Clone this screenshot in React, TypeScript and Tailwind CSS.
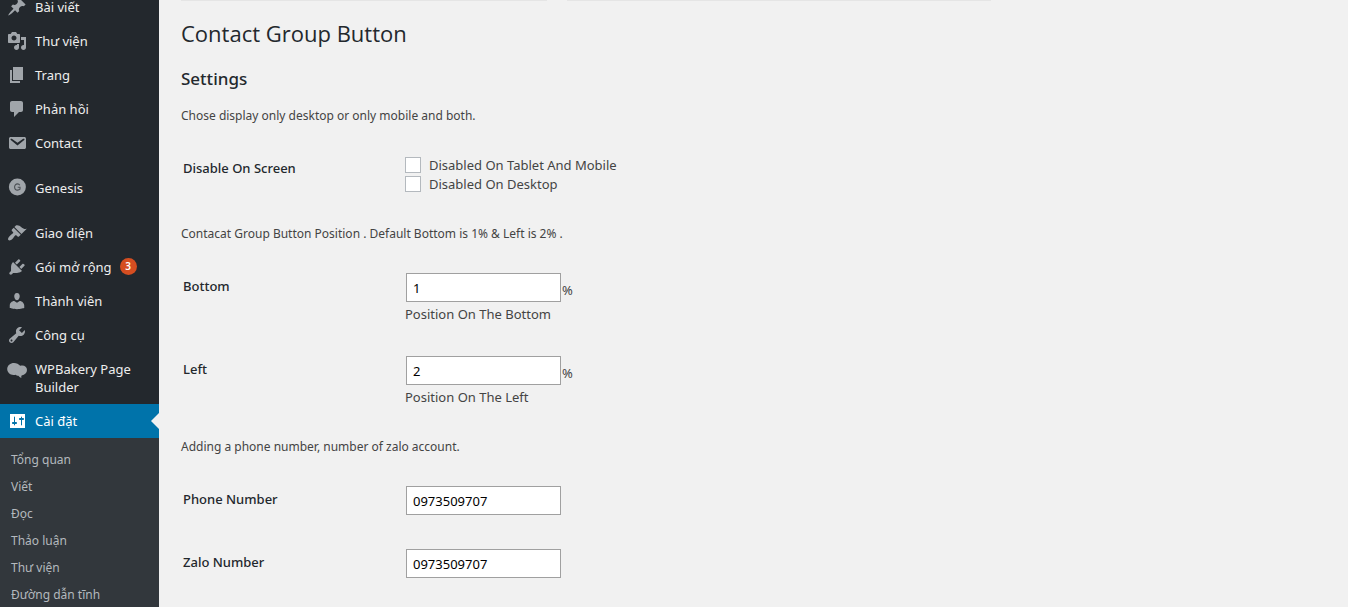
import React from "react";

const paths = {
  post: "M10.44 3.02l1.82-1.82 6.36 6.35-1.83 1.82c-1.05-.68-2.48-.57-3.41.36l-.75.75c-.92.93-1.04 2.35-.35 3.41l-1.83 1.82-2.41-2.41-2.8 2.79c-.42.42-3.38 2.71-3.8 2.29s1.86-3.39 2.28-3.81l2.79-2.79L4.1 9.36l1.83-1.82c1.05.69 2.48.57 3.4-.36l.75-.75c.93-.92 1.05-2.35.36-3.41z",
  media: "M13 11V4c0-.55-.45-1-1-1h-1.67L9 1H5L3.67 3H2c-.55 0-1 .45-1 1v7c0 .55.45 1 1 1h10c.55 0 1-.45 1-1zM7 4.5c1.38 0 2.5 1.12 2.5 2.5S8.38 9.5 7 9.5 4.5 8.38 4.5 7 5.62 4.5 7 4.5zM14 6h5v10.5c0 1.38-1.12 2.5-2.5 2.5S14 17.88 14 16.5s1.12-2.5 2.5-2.5c.17 0 .34.02.5.05V9h-3V6zm-4 8.05V13h2v3.5c0 1.38-1.12 2.5-2.5 2.5S7 17.88 7 16.5 8.12 14 9.5 14c.17 0 .34.02.5.05z",
  page: "M6 15V2h10v13H6zm-1 1h8v2H3V5h2v11z",
  comments: "M5 2h9c1.1 0 2 .9 2 2v7c0 1.1-.9 2-2 2h-2l-5 5v-5H5c-1.1 0-2-.9-2-2V4c0-1.1.9-2 2-2z",
  email: "M3.87 4h13.25C18.37 4 19 4.59 19 5.79v8.42c0 1.19-.63 1.79-1.88 1.79H3.87c-1.25 0-1.88-.6-1.88-1.79V5.79c0-1.2.63-1.79 1.88-1.79zm6.62 8.6l6.74-5.53c.24-.2.43-.66.13-1.07-.29-.41-.82-.42-1.17-.17l-5.7 3.86L4.8 5.83c-.35-.25-.88-.24-1.17.17-.3.41-.11.87.13 1.07z",
  appearance: "M14.48 11.06L7.41 3.99l1.5-1.5c.5-.56 2.3-.47 3.51.32 1.21.8 1.43 1.28 2.91 2.1 1.18.64 2.45 1.26 4.45.85zm-.71.71L6.7 4.7 4.93 6.47c-.39.39-.39 1.02 0 1.41l1.06 1.06c.39.39.39 1.03 0 1.42-.6.6-1.43 1.11-2.21 1.69-.35.26-.7.53-1.01.84C1.43 14.23.4 16.08 1.4 17.07c.99 1 2.84-.03 4.18-1.36.31-.31.58-.66.85-1.02.57-.78 1.08-1.61 1.69-2.21.39-.39 1.02-.39 1.41 0l1.06 1.06c.39.39 1.02.39 1.41 0z",
  plugins: "M13.11 4.36L9.87 7.6 8 5.73l3.24-3.24c.35-.34 1.05-.2 1.56.32.52.51.66 1.21.31 1.55zm-8 1.77l.91-1.12 9.01 9.01-1.19.84c-.71.71-2.63 1.16-3.82 1.16H6.14L4.9 17.26c-.59.59-1.54.59-2.12 0-.59-.58-.59-1.53 0-2.12l1.24-1.24v-3.88c0-1.13.4-3.19 1.09-3.89zm7.26 3.97l3.24-3.24c.34-.35 1.04-.21 1.55.31.52.51.66 1.21.31 1.55l-3.24 3.25z",
  users: "M10 9.25c-2.27 0-2.73-3.44-2.73-3.44C7 4.02 7.82 2 9.97 2c2.16 0 2.98 2.02 2.71 3.81 0 0-.41 3.44-2.68 3.44zm0 2.57L12.72 10c2.39 0 4.52 2.33 4.52 4.53v2.49s-3.65 1.13-7.24 1.13c-3.65 0-7.24-1.13-7.24-1.13v-2.49c0-2.25 1.94-4.48 4.47-4.48z",
  tools: "M16.68 9.77c-1.34 1.34-3.3 1.67-4.95.99l-5.41 6.52c-.99.99-2.59.99-3.58 0s-.99-2.59 0-3.57l6.52-5.42c-.68-1.65-.35-3.61.99-4.95 1.28-1.28 3.12-1.62 4.72-1.06l-2.89 2.89 2.82 2.82 2.86-2.87c.53 1.58.18 3.39-1.08 4.65zM3.81 16.21c.4.39 1.04.39 1.43 0 .4-.4.4-1.04 0-1.43-.39-.4-1.03-.4-1.43 0-.39.39-.39 1.03 0 1.43z",
  bakery: "M7 4C3.300 4 .2 6.600.2 10c0 3.400 2.900 5.800 6.200 6 1 .1 1.700-.1 2.400-.2.500.9 1.500 1.200 2.600 1 .5.8 1.600 1.600 3 2.200-.3-.9-.2-1.800.2-2.600 3.300-.5 5.400-2.700 5.400-5.500 0-2.800-2.200-4.500-4.600-4.500-.9 0-1.500.1-2.200.4C11.700 5.100 9.600 4 7 4z",
  settings: "M18 17V3H3v14zM8 11h1c.55 0 1 .45 1 1s-.45 1-1 1H8v1c0 .28-.22.500-.5.500s-.5-.22-.5-.5V13H6c-.55 0-1-.45-1-1s.45-1 1-1h1V6c0-.28.22-.5.500-.5s.5.22.500.500V11zm6-2h-1c-.55 0-1-.45-1-1s.45-1 1-1h1V6c0-.28.22-.5.500-.5s.5.22.500.500V7h1c.55 0 1 .45 1 1s-.45 1-1 1h-1v5c0 .28-.22.500-.5.500s-.5-.22-.5-.5V9z",
};

type IconName = keyof typeof paths | "genesis";

function MenuIcon({ name }: { name: IconName }) {
  return (
    <svg viewBox="0 0 20 20" className="h-5 w-5 shrink-0 fill-current" aria-hidden="true">
      {name === "genesis" ? (
        <>
          <circle cx="10.400" cy="9" r="8.500" />
          <path
            d="M12.800 7.200C12.300 6.300 11.500 5.900 10.500 5.900C8.700 5.900 7.600 7.200 7.600 9C7.600 10.900 8.800 12.100 10.600 12.100C11.600 12.100 12.500 11.700 13 11.200V9.200H10.700"
            fill="none"
            stroke="#4a4e53"
            strokeWidth="1.1"
          />
        </>
      ) : (
        <path fillRule="evenodd" d={paths[name]} />
      )}
    </svg>
  );
}

const groups: { icon: IconName; label: string; count?: number; active?: boolean }[][] = [
  [
    { icon: "post", label: "Bài viết" },
    { icon: "media", label: "Thư viện" },
    { icon: "page", label: "Trang" },
    { icon: "comments", label: "Phản hồi" },
    { icon: "email", label: "Contact" },
  ],
  [{ icon: "genesis", label: "Genesis" }],
  [
    { icon: "appearance", label: "Giao diện" },
    { icon: "plugins", label: "Gói mở rộng", count: 3 },
    { icon: "users", label: "Thành viên" },
    { icon: "tools", label: "Công cụ" },
    { icon: "bakery", label: "WPBakery Page Builder" },
    { icon: "settings", label: "Cài đặt", active: true },
  ],
];

const submenu = ["Tổng quan", "Viết", "Đọc", "Thảo luận", "Thư viện", "Đường dẫn tĩnh"];

function Sidebar() {
  return (
    <nav className="w-[159px] shrink-0 overflow-hidden bg-[#23282d]">
      <div className="-mt-2.5 flex flex-col gap-[11px]">
        {groups.map((group, i) => (
          <ul key={i}>
            {group.map((item) => (
              <li key={item.label}>
                <a
                  href="#"
                  aria-current={item.active ? "page" : undefined}
                  className={
                    item.active
                      ? "relative flex gap-2 bg-[#0073aa] py-2 pl-[7px] text-[13px] leading-[18px] text-white"
                      : "relative flex gap-2 py-2 pl-[7px] text-[13px] leading-[18px] text-[#eeeeee]"
                  }
                >
                  <span className={item.active ? "-my-px h-5 text-white" : "-my-px h-5 text-[#a0a5aa]"}>
                    <MenuIcon name={item.icon} />
                  </span>
                  <span>{item.label}</span>
                  {item.count && (
                    <span className="h-[17px] w-[17px] rounded-full bg-[#d54e21] text-center text-[10px] leading-[17px] font-semibold text-white">
                      {item.count}
                    </span>
                  )}
                  {item.active && (
                    <span className="absolute top-1/2 right-0 -translate-y-1/2 border-y-8 border-r-8 border-y-transparent border-r-[#f1f1f1]" />
                  )}
                </a>
              </li>
            ))}
          </ul>
        ))}
      </div>
      <ul className="bg-[#32373c] pt-2 pb-2">
        {submenu.map((label) => (
          <li key={label}>
            <a href="#" className="block pl-[11px] text-xs leading-[27px] text-[#b4b9be]">
              {label}
            </a>
          </li>
        ))}
      </ul>
    </nav>
  );
}

function TextField({ id, label, value, suffix, hint }: { id: string; label: string; value: string; suffix?: string; hint?: string }) {
  return (
    <div className="flex">
      <label htmlFor={id} className="w-[222px] shrink-0 pt-1 pl-0.5 text-[13px] leading-[18px] font-medium text-[#23282d]">
        {label}
      </label>
      <div className="flex flex-col gap-[3px]">
        <div className="flex items-center gap-px pl-[3px]">
          <input
            id={id}
            type="text"
            defaultValue={value}
            className="h-[29px] w-[155px] border border-[#a0a0a0] bg-white px-1.5 text-[13px] text-black"
          />
          {suffix && <span className="pt-1 text-[13px] leading-[18px]">{suffix}</span>}
        </div>
        {hint && <p className="pl-0.5 text-[13px] leading-[18px]">{hint}</p>}
      </div>
    </div>
  );
}

function CheckField({ label }: { label: string }) {
  return (
    <label className="flex items-start gap-2 text-[13px] leading-[19px]">
      <input type="checkbox" className="mt-px h-4 w-4 appearance-none border border-[#b4b9be] bg-white" />
      {label}
    </label>
  );
}

export default function App() {
  return (
    <div className="flex h-screen overflow-hidden bg-[#f1f1f1] font-['Noto_Sans','Open_Sans',sans-serif] text-[#444444]">
      <Sidebar />
      <main className="min-w-0 flex-1 pl-[22px]">
        <div className="flex gap-5">
          <div className="h-px w-[366px] bg-[#e5e5e5]" />
          <div className="h-px w-[424px] bg-[#e5e5e5]" />
        </div>
        <h1 className="mt-[18px] font-['Open_Sans','Noto_Sans',sans-serif] text-[22px] leading-7 text-[#23282d]">Contact Group Button</h1>
        <form>
          <h2 className="mt-5 text-[17px] leading-6 font-medium text-[#23282d]">Settings</h2>
          <p className="mt-4 text-xs leading-[18px]">Chose display only desktop or only mobile and both.</p>
          <fieldset className="mt-[31px] flex">
            <legend className="float-left w-[224px] pt-[3px] pl-0.5 text-[13px] leading-[18px] font-medium text-[#23282d]">
              Disable On Screen
            </legend>
            <div>
              <CheckField label="Disabled On Tablet And Mobile" />
              <CheckField label="Disabled On Desktop" />
            </div>
          </fieldset>
          <p className="mt-[31px] text-xs leading-[18px]">Contacat Group Button Position . Default Bottom is 1% &amp; Left is 2% .</p>
          <div className="mt-[30px] flex flex-col gap-[33px]">
            <TextField id="bottom" label="Bottom" value="1" suffix="%" hint="Position On The Bottom" />
            <TextField id="left" label="Left" value="2" suffix="%" hint="Position On The Left" />
          </div>
          <p className="mt-8 text-xs leading-[18px]">Adding a phone number, number of zalo account.</p>
          <div className="mt-[30px] flex flex-col gap-[34px]">
            <TextField id="phone" label="Phone Number" value="0973509707" />
            <TextField id="zalo" label="Zalo Number" value="0973509707" />
          </div>
        </form>
      </main>
    </div>
  );
}
